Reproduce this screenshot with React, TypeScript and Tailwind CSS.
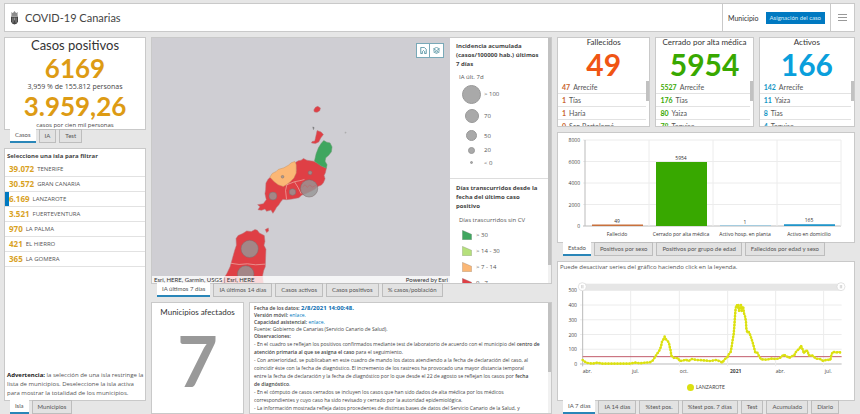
import React, { useState } from "react";

const FONT = "font-['Lato','Noto_Sans',sans-serif]";
const COPY = "font-['Open_Sans','Noto_Sans',sans-serif]";

type TabsProps = { items: string[]; label: string };

function Tabs({ items, label }: TabsProps) {
  const [active, setActive] = useState(0);
  return (
    <div role="tablist" aria-label={label} className="relative -mt-px flex shrink-0 gap-[3px] pl-1.5">
      {items.map((item, i) => (
        <button
          key={item}
          type="button"
          role="tab"
          aria-selected={i === active}
          onClick={() => setActive(i)}
          className={
            "h-[14px] whitespace-nowrap px-[5px] text-[6px] leading-[12px] text-[#555] " +
            (i === active
              ? "border-b-2 border-[#2a86b8] bg-white"
              : "border border-[#bdbdbd] bg-[#e2e2e2]")
          }
        >
          {item}
        </button>
      ))}
    </div>
  );
}

function Panel({ className = "", children }: { className?: string; children: React.ReactNode }) {
  return (
    <section className={"overflow-hidden border border-[#c9c9c9] bg-white " + className}>{children}</section>
  );
}

function Crest() {
  return (
    <svg viewBox="0 0 20 36" className="h-[14px] w-[9px]" aria-hidden="true">
      <path d="M3 9 L1 3 L6 5 L10 0 L14 5 L19 3 L17 9 Z" fill="#8a8a8a" />
      <rect x="2" y="9" width="16" height="3" fill="#555" />
      <path d="M1 14 H19 V27 Q18 33 10 35 Q2 33 1 27 Z" fill="#444" />
      <path d="M6 17 V30 M10 17 V24 M14 17 V30" stroke="#aaa" strokeWidth="2" />
    </svg>
  );
}

const islands = [
  ["39.072", "TENERIFE"],
  ["30.572", "GRAN CANARIA"],
  ["6.169", "LANZAROTE"],
  ["3.521", "FUERTEVENTURA"],
  ["970", "LA PALMA"],
  ["421", "EL HIERRO"],
  ["365", "LA GOMERA"],
];

function LeftColumn() {
  const [selected, setSelected] = useState("LANZAROTE");
  return (
    <div className="flex min-h-0 min-w-0 flex-col gap-[5px]">
      <div className="flex shrink-0 flex-col">
        <Panel className="text-center whitespace-nowrap">
          <h2 className="text-[13px] leading-[15px] text-[#333]">Casos positivos</h2>
          <p className="text-[26px] font-bold leading-[30px] text-[#dd9b14]">6169</p>
          <p className={"text-[7px] leading-[8px] text-[#444] " + COPY}>3,959 % de 155.812 personas</p>
          <p className="text-[26px] font-bold leading-[30px] text-[#dd9b14]">3.959,26</p>
          <p className={"text-[6px] leading-[8px] text-[#444] " + COPY}>casos por cien mil personas</p>
        </Panel>
        <Tabs items={["Casos", "IA", "Test"]} label="Indicador" />
      </div>
      <div className="flex min-h-0 flex-1 flex-col">
        <Panel className="flex flex-1 flex-col">
          <h2 className={"px-0.5 pt-px text-[6px] font-bold leading-3 text-[#444] " + COPY}>Seleccione una isla para filtrar</h2>
          <ul>
            {islands.map(([n, name]) => (
              <li key={name} className="border-b border-[#e2e2e2]">
                <button
                  type="button"
                  onClick={() => setSelected(name)}
                  className={
                    "flex h-[14px] w-full items-center gap-[3px] border-l-4 text-left " +
                    (name === selected ? "border-[#0079c1]" : "border-transparent")
                  }
                >
                  <strong className={"text-[8px] leading-3 text-[#d9a21f] " + COPY}>{n}</strong>
                  <span className={"text-[6px] leading-3 text-[#555] " + COPY}>{name}</span>
                </button>
              </li>
            ))}
          </ul>
          <p className={"mt-auto pl-0.5 pb-0.5 text-[6px] leading-[9px] text-[#555] " + COPY}>
            <strong className="text-[#222]">Advertencia:</strong> la selección de una isla restringe la lista de
            municipios. Deseleccione la isla activa para mostrar la totalidad de los municipios.
          </p>
        </Panel>
        <Tabs items={["Isla", "Municipios"]} label="Ámbito" />
      </div>
    </div>
  );
}

function IslandMap() {
  return (
    <svg viewBox="0 0 299 246" preserveAspectRatio="xMidYMid slice" className="absolute inset-0 h-full w-full" role="img" aria-label="Mapa de Lanzarote">
      <g transform="translate(79 93) scale(0.3333)">
        <g fill="#df3f45" stroke="#b9767a" strokeWidth="1.5">
          <path d="M250 -62 L255 -70 L262 -73 L270 -68 L268 -60 L260 -55 L252 -56 Z" />
          <path d="M260 0 L272 4 L279 12 L271 22 L265 34 L255 39 L243 37 L245 33 L253 31 L256 18 Z" />
          <path d="M247 -11 L251 -9 L249 -3 Z" fill="#777" stroke="#777" />
          <path d="M344 4 L348 6 L344 8 Z" fill="#aaa" stroke="#aaa" />
          <path d="M195 96 L203 91 L212 89 L219 84 L229 89 L239 91 L249 92 L262 98 L271 105 L288 113 L285 127 L281 135 L284 145 L279 157 L273 164 L262 168 L254 176 L243 182 L226 190 L214 194 L205 202 L185 206 L168 208 L157 207 L150 215 L145 223 L138 231 L133 240 L127 249 L121 239 L108 243 L103 236 L93 240 L82 238 L88 229 L81 223 L98 220 L107 208 L103 190 L105 178 L106 158 L112 147 L118 141 L150 158 L180 145 L197 120 Z" />
          <path d="M104 298 L113 293 L114 302 L108 307 Z" />
          <path d="M16 325 L22 316 L36 310 L48 302 L62 304 L73 298 L80 300 L86 308 L101 316 L103 334 L100 345 L106 357 L105 382 L104 410 L99 422 L96 436 L99 470 L-36 470 L-24 450 L-12 431 L-2 410 L5 385 L12 360 L17 345 Z" />
        </g>
        <path d="M118 140 L125 129 L137 123 L143 117 L160 112 L174 104 L182 97 L193 93 L197 103 L197 128 L190 143 L180 153 L169 162 L158 168 L143 163 L130 153 Z" fill="#fbb775" stroke="#c99363" strokeWidth="1.5" />
        <path d="M252 92 L257 70 L264 52 L272 39 L280 30 L289 35 L299 37 L305 49 L303 64 L295 74 L286 82 L284 92 L290 103 L288 113 L271 106 Z" fill="#3fa65f" stroke="#6a9a6f" strokeWidth="1.5" />
        <g fill="none" stroke="#eeb5ae" strokeWidth="2">
          <path d="M169 163 L192 154 L212 150 L222 147 M192 154 L202 170 L212 190 M169 163 L165 180 L168 207 M-2 399 L25 403 L50 401 L75 404 L104 402" />
        </g>
        <g fill="#969696" fillOpacity="0.82" stroke="#7d6b6b" strokeWidth="1.5">
          <circle cx="236" cy="174" r="26" />
          <circle cx="239" cy="127" r="6" />
          <circle cx="186" cy="185" r="10" />
          <circle cx="127" cy="197" r="12" />
          <circle cx="156" cy="139" r="4" />
          <circle cx="57" cy="356" r="26" />
          <circle cx="45" cy="432" r="25" />
        </g>
        <path d="M216 170 L224 163 L230 171 L238 164 L246 170 L256 165" fill="none" stroke="#b66" strokeWidth="1.5" />
      </g>
    </svg>
  );
}

const sizes = [
  ["size-[19px]", "> 100", "h-[22px]"],
  ["size-[14px]", "70", "h-[22px]"],
  ["size-[11px]", "50", "h-[17px]"],
  ["size-[7px]", "20", "h-[12px]"],
  ["size-[3px]", "< 0", "h-[13px]"],
];

const ranges = [
  ["#3fa65f", "> 30"],
  ["#b5e07b", "> 14 - 30"],
  ["#fbb775", "> 7 - 14"],
  ["#df3f45", "0 - 7"],
];

function MapPanel() {
  return (
    <div className="flex min-h-0 flex-[260_1_0%] flex-col">
      <Panel className="flex min-h-0 flex-1">
        <div className="relative min-w-0 flex-1 bg-[#cfced3]">
          <IslandMap />
          <div className="absolute right-[6px] top-[5px] flex border border-[#79a9b8] bg-white">
            <button type="button" aria-label="Vista inicial" className="grid h-[13px] w-[13px] place-items-center border-r border-[#79a9b8]">
              <svg viewBox="0 0 18 18" className="size-[7px]" fill="none" stroke="#3b8294" strokeWidth="2">
                <path d="M2 1 H11 L16 6 V17 H12 V12 L9 9 L6 12 V17 H2 Z" />
              </svg>
            </button>
            <button type="button" aria-label="Capas" className="grid h-[13px] w-[13px] place-items-center">
              <svg viewBox="0 0 18 18" className="size-[7px]" fill="none" stroke="#3b8294" strokeWidth="1.8">
                <path d="M9 1 L17 5 L9 9 L1 5 Z M1 9 L9 13 L17 9 M1 12.500 L9 16.500 L17 12.500" />
              </svg>
            </button>
          </div>
          <div className="absolute inset-x-0 bottom-0 flex justify-between bg-white/80 px-0.5 text-[6px] leading-[7px] text-[#323232]">
            <span>Esri, HERE, Garmin, USGS | Esri, HERE</span>
            <span>Powered by Esri</span>
          </div>
        </div>
        <div className="flex w-[101px] shrink-0">
          <div className={"min-w-0 flex-1 overflow-hidden text-[#555] " + COPY}>
            <div className="px-1.5 pt-1 pb-[9px]">
              <h3 className="text-[6px] font-bold leading-[9px] text-[#444]">Incidencia acumulada (casos/100000 hab.) últimos 7 días</h3>
              <p className="pt-1 pl-[3px] text-[6px] leading-[9px]">IA últ. 7d</p>
              <ul className="pt-px">
                {sizes.map(([s, t, h]) => (
                  <li key={t} className={"flex items-center gap-[3px] pl-1.5 " + h}>
                    <span className="grid w-[19px] place-items-center">
                      <span className={"rounded-full border border-[#999] bg-[#a9a9a9] " + s} />
                    </span>
                    <span className="text-[6px] leading-[8px]">{t}</span>
                  </li>
                ))}
              </ul>
            </div>
            <div className="border-t border-[#ddd] px-1.5 pt-[5px]">
              <h3 className="text-[6px] font-bold leading-[9px] text-[#444]">Días transcurridos desde la fecha del último caso positivo</h3>
              <p className="pt-[5px] pl-[3px] text-[6px] leading-[9px]">Días trascurridos sin CV</p>
              <ul className="pt-0.5">
                {ranges.map(([c, t]) => (
                  <li key={t} className="flex h-4 items-center gap-1 pl-1.5">
                    <svg viewBox="0 0 30 30" className="size-[10px]" aria-hidden="true">
                      <path d="M1 1 L29 13 V29 H1 Z" fill={c} stroke="#888" strokeWidth="1" />
                    </svg>
                    <span className="text-[6px] leading-[8px]">{t}</span>
                  </li>
                ))}
              </ul>
            </div>
          </div>
          <div className="w-[3px] bg-[#f1f1f1] pb-[18px]">
            <div className="h-full bg-[#c1c1c1]" />
          </div>
        </div>
      </Panel>
      <Tabs
        items={["IA últimos 7 días", "IA últimos 14 días", "Casos activos", "Casos positivos", "% casos/población"]}
        label="Capa del mapa"
      />
    </div>
  );
}

function Notes() {
  return (
    <Panel className="flex min-w-0 flex-1">
      <div className={"min-w-0 flex-1 overflow-hidden pt-0.5 pr-[5px] pl-1 text-[5px] leading-[8px] text-[#444] " + COPY}>
        <div className="leading-[7px]">
          <p>
            <b className="font-semibold">Fecha de los datos:</b> <strong className="text-[6px] text-[#0a6cb0]">2/8/2021 14:00:48.</strong>
          </p>
          <p>
            <b className="font-semibold">Versión móvil:</b> <a href="#movil" className="text-[#007ac2]">enlace.</a>
          </p>
          <p>
            <b className="font-semibold">Capacidad asistencial:</b> <a href="#capacidad" className="text-[#007ac2]">enlace.</a>
          </p>
          <p>Fuente: Gobierno de Canarias (Servicio Canario de Salud).</p>
          <p>
            <b className="font-semibold">Observaciones:</b>
          </p>
        </div>
        <p>
          - En el cuadro se reflejan los positivos confirmados mediante test de laboratorio de acuerdo con el municipio del{" "}
          <b className="font-semibold">centro de atención primaria al que se asigna el caso</b> para el seguimiento.
        </p>
        <p>
          - Con anterioridad, se publicaban en este cuadro de mando los datos atendiendo a la fecha de declaración del caso, al
          coincidir éste con la fecha de diagnóstico. El incremento de los rastreos ha provocado una mayor distancia temporal
          entre&nbsp;la&nbsp;fecha de declaración y la fecha de diagnóstico por lo que desde el 22 de agosto se reflejan los casos por{" "}
          <b className="font-semibold">fecha de&nbsp;diagnóstico</b>.
        </p>
        <p>
          - En el cómputo de casos cerrados se incluyen los casos que han sido dados de alta médica por los médicos
          correspondientes y cuyo caso ha sido revisado y cerrado por la autoridad epidemiológica.
        </p>
        <p>- La información mostrada refleja datos procedentes de distintas bases de datos del Servicio Canario de la Salud, y</p>
      </div>
      <div className="w-[3px] bg-[#f1f1f1]">
        <div className="h-5/8 bg-[#c1c1c1]" />
      </div>
    </Panel>
  );
}

const totals = [
  { title: "Fallecidos", total: "49", tone: "text-[#f05514]", num: "text-[#c8622c]", width: "flex-[94_1_0%]", rows: [["47", "Arrecife"], ["1", "Tías"], ["1", "Haría"], ["0", "San Bartolomé"]] },
  { title: "Cerrado por alta médica", total: "5954", tone: "text-[#38a800]", num: "text-[#38a800]", width: "flex-[99_1_0%]", rows: [["5527", "Arrecife"], ["176", "Tías"], ["80", "Yaiza"], ["78", "Teguise"]] },
  { title: "Activos", total: "166", tone: "text-[#0a9fdc]", num: "text-[#1496c4]", width: "flex-[97_1_0%]", rows: [["142", "Arrecife"], ["11", "Yaiza"], ["8", "Tías"], ["4", "Teguise"]] },
];

function Totals() {
  return (
    <div className="flex min-h-0 flex-[90_1_0%] gap-[5px]">
      {totals.map((t) => (
        <Panel key={t.title} className={"flex min-w-0 flex-col " + t.width}>
          <h2 className="whitespace-nowrap text-center text-[8px] leading-[9px] text-[#333]">{t.title}</h2>
          <p className={"text-center text-[30px] font-bold leading-[34px] " + t.tone}>{t.total}</p>
          <div className="flex min-h-0 flex-1">
            <ul className="min-w-0 flex-1 overflow-hidden">
              {t.rows.map(([n, name]) => (
                <li key={name} className="flex h-[13px] items-center gap-[3px] border-b border-[#e2e2e2] pl-1 text-[7px] leading-[10px] text-[#555]">
                  <strong className={t.num}>{n}</strong>
                  {name}
                </li>
              ))}
            </ul>
            <div className="w-[3px]">
              <div className="h-5 bg-[#c1c1c1]" />
            </div>
          </div>
        </Panel>
      ))}
    </div>
  );
}

const bars = [
  { name: "Fallecido", value: 49, color: "#c8703c" },
  { name: "Cerrado por alta médica", value: 5954, color: "#38a800" },
  { name: "Activo hosp. en planta", value: 1, color: "#6bbbe0" },
  { name: "Activo en domicilio", value: 165, color: "#1f95c9" },
];

function BarChart() {
  const y = (v: number) => 94 - (v / 8000) * 86;
  return (
    <svg viewBox="0 1 296 109" className={"h-full w-full " + COPY} role="img" aria-label="Casos por estado">
      {[0, 2000, 4000, 6000, 8000].map((v) => (
        <g key={v}>
          <line x1="25" x2="283" y1={y(v)} y2={y(v)} stroke={v ? "#ececec" : "#bbb"} strokeWidth="1" />
          <text x="22" y={y(v) + 2} textAnchor="end" fontSize="5" fill="#444">{v}</text>
        </g>
      ))}
      {[0, 1, 2, 3, 4].map((i) => (
        <line key={i} x1={27 + i * 64} x2={27 + i * 64} y1="8" y2="94" stroke={i ? "#ececec" : "#bbb"} />
      ))}
      {bars.map((b, i) => {
        const h = Math.max(94 - y(b.value), b.value > 10 ? 1.5 : 0.5);
        return (
          <g key={b.name}>
            <rect x={34 + i * 64} y={94 - h} width="51" height={h} fill={b.color} />
            <text x={59 + i * 64} y={92 - h} textAnchor="middle" fontSize="5" fill="#333">{b.value}</text>
            <text x={59 + i * 64} y="104" textAnchor="middle" fontSize="5" fill="#333">{b.name}</text>
          </g>
        );
      })}
    </svg>
  );
}

const series =
  "M98 315 L104 320 L112 324 L128 326 L142 323 L156 326 L240 326 L256 323 L270 325 L286 323 L300 322 L308 317 L314 308 L320 298 L327 289 L333 275 L336 260 L341 252 L344 245 L348 253 L353 258 L357 264 L359 275 L362 287 L364 302 L372 309 L384 309 L389 318 L398 317 L407 314 L416 318 L425 312 L440 315 L460 316 L480 318 L499 315 L510 319 L517 323 L524 313 L532 307 L537 297 L542 291 L545 275 L548 255 L551 238 L553 215 L555 185 L557 160 L559 152 L561 150 L563 158 L565 149 L567 168 L570 158 L573 150 L575 168 L577 155 L580 158 L582 175 L585 183 L588 200 L589 220 L592 233 L597 231 L601 241 L604 250 L608 262 L612 277 L616 293 L622 293 L627 303 L633 313 L650 314 L665 311 L680 312 L690 309 L697 303 L702 299 L708 303 L718 309 L726 303 L732 303 L737 292 L742 286 L748 282 L753 272 L757 281 L762 295 L766 287 L773 288 L776 301 L788 302 L798 311 L810 312 L820 318 L830 314 L841 315 L845 297 L850 290 L858 293 L866 291 L873 293";

function LineChart() {
  const ticks: [number, string][] = [[98, "abr."], [242, "jul."], [388, "oct."], [533, "2021"], [677, "abr."], [821, "jul."]];
  return (
    <svg viewBox="0 0 296 103" className={"min-h-0 w-full flex-1 " + COPY} role="img" aria-label="Incidencia acumulada a 7 días">
      <g transform="translate(-8 -23) scale(0.3333)">
        {[0, 100, 200, 300, 400, 500].map((v) => (
          <g key={v}>
            <line x1="90" x2="875" y1={327 - v * 0.442} y2={327 - v * 0.442} stroke={v ? "#ececec" : "#bbb"} strokeWidth="3" />
            <text x="81" y={333 - v * 0.442} textAnchor="end" fontSize="15" fill="#444">{v}</text>
          </g>
        ))}
        {ticks.map(([x, t]) => (
          <g key={x}>
            <line x1={x} x2={x} y1="106" y2="334" stroke={x === 98 ? "#bbb" : "#ececec"} strokeWidth="3" />
            <text x={x + (t === "2021" ? 24 : 14)} y="353" textAnchor="middle" fontSize="15" fontWeight={t === "2021" ? 700 : 400} fill="#444">{t}</text>
          </g>
        ))}
        <rect x="97" y="86" width="776" height="20" fill="#e6e6e6" />
        {[97, 873].map((x) => (
          <g key={x}>
            <circle cx={x} cy="95" r="12" fill="#fff" stroke="#d5d5d5" strokeWidth="2" />
            <path d={`M${x - 2} 90 V100 M${x + 2} 90 V100`} stroke="#aaa" strokeWidth="1.5" />
          </g>
        ))}
        <line x1="98" x2="875" y1="305" y2="305" stroke="#c25b6a" strokeWidth="3" />
        <path d={series} fill="none" stroke="#e3e830" strokeWidth="5" strokeLinejoin="round" />
        <path d={series} fill="none" stroke="#dbe010" strokeWidth="8" strokeLinecap="round" strokeDasharray="0 9" />
      </g>
    </svg>
  );
}

export default function App() {
  return (
    <div className={"flex h-screen flex-col gap-[5px] bg-[#e6e6e6] pl-1 pr-[5px] pt-[3px] " + FONT}>
      <header className="flex h-[29px] shrink-0 items-stretch border border-[#c9c9c9] bg-white text-[#444]">
        <div className="flex flex-1 items-center gap-[6px] pl-[5px]">
          <Crest />
          <h1 className="text-[11px] leading-4">COVID-19 Canarias</h1>
        </div>
        <div className="flex items-center gap-[7px] border-l border-[#c9c9c9] px-[5px] text-[#333]">
          <span className="text-[7px] leading-3">Municipio</span>
          <button type="button" className="h-3 bg-[#0079c1] px-1 text-[6px] leading-3 text-[#d8ecf8]">Asignación del caso</button>
        </div>
        <button type="button" aria-label="Menú" className="grid w-6 place-items-center border-l border-[#c9c9c9]">
          <svg viewBox="0 0 9 9" className="size-[9px]" stroke="#999" strokeWidth="1">
            <path d="M0 1.500 H9 M0 4.500 H9 M0 7.500 H9" />
          </svg>
        </button>
      </header>
      <main className="grid min-h-0 flex-1 grid-cols-[142fr_401fr_298fr] grid-rows-[minmax(0,1fr)] gap-[5px]">
        <LeftColumn />
        <div className="flex min-h-0 min-w-0 flex-col gap-[5px]">
          <MapPanel />
          <div className="flex min-h-0 flex-[112_1_0%] gap-[5px]">
            <Panel className="w-[93px] shrink-0 text-center">
              <h2 className="pt-1 text-[8px] leading-[10px] text-[#333]">Municipios afectados</h2>
              <p className="text-[70px] font-bold leading-[86px] text-[#999]">7</p>
            </Panel>
            <Notes />
          </div>
        </div>
        <div className="flex min-h-0 min-w-0 flex-col gap-[5px]">
          <Totals />
          <div className="flex min-h-0 flex-[124_1_0%] flex-col">
            <Panel className="min-h-0 flex-1">
              <BarChart />
            </Panel>
            <Tabs
              items={["Estado", "Positivos por sexo", "Positivos por grupo de edad", "Fallecidos por edad y sexo"]}
              label="Distribución"
            />
          </div>
          <div className="flex min-h-0 flex-[153_1_0%] flex-col">
            <Panel className="flex min-h-0 flex-1 flex-col">
              <p className={"px-0.5 pt-px pb-1 text-[6px] leading-[9px] text-[#555] " + COPY}>
                Puede desactivar series del gráfico haciendo click en la leyenda.
              </p>
              <LineChart />
              <button type="button" className="mx-auto mb-[9px] flex items-center gap-0.5 text-[5px] leading-[8px] text-[#444]">
                <span className="size-[7px] rounded-full bg-[#dbe010]" />
                LANZAROTE
              </button>
            </Panel>
            <Tabs
              items={["IA 7 días", "IA 14 días", "%test pos.", "%test pos. 7 días", "Test", "Acumulado", "Diario"]}
              label="Serie temporal"
            />
          </div>
        </div>
      </main>
    </div>
  );
}
